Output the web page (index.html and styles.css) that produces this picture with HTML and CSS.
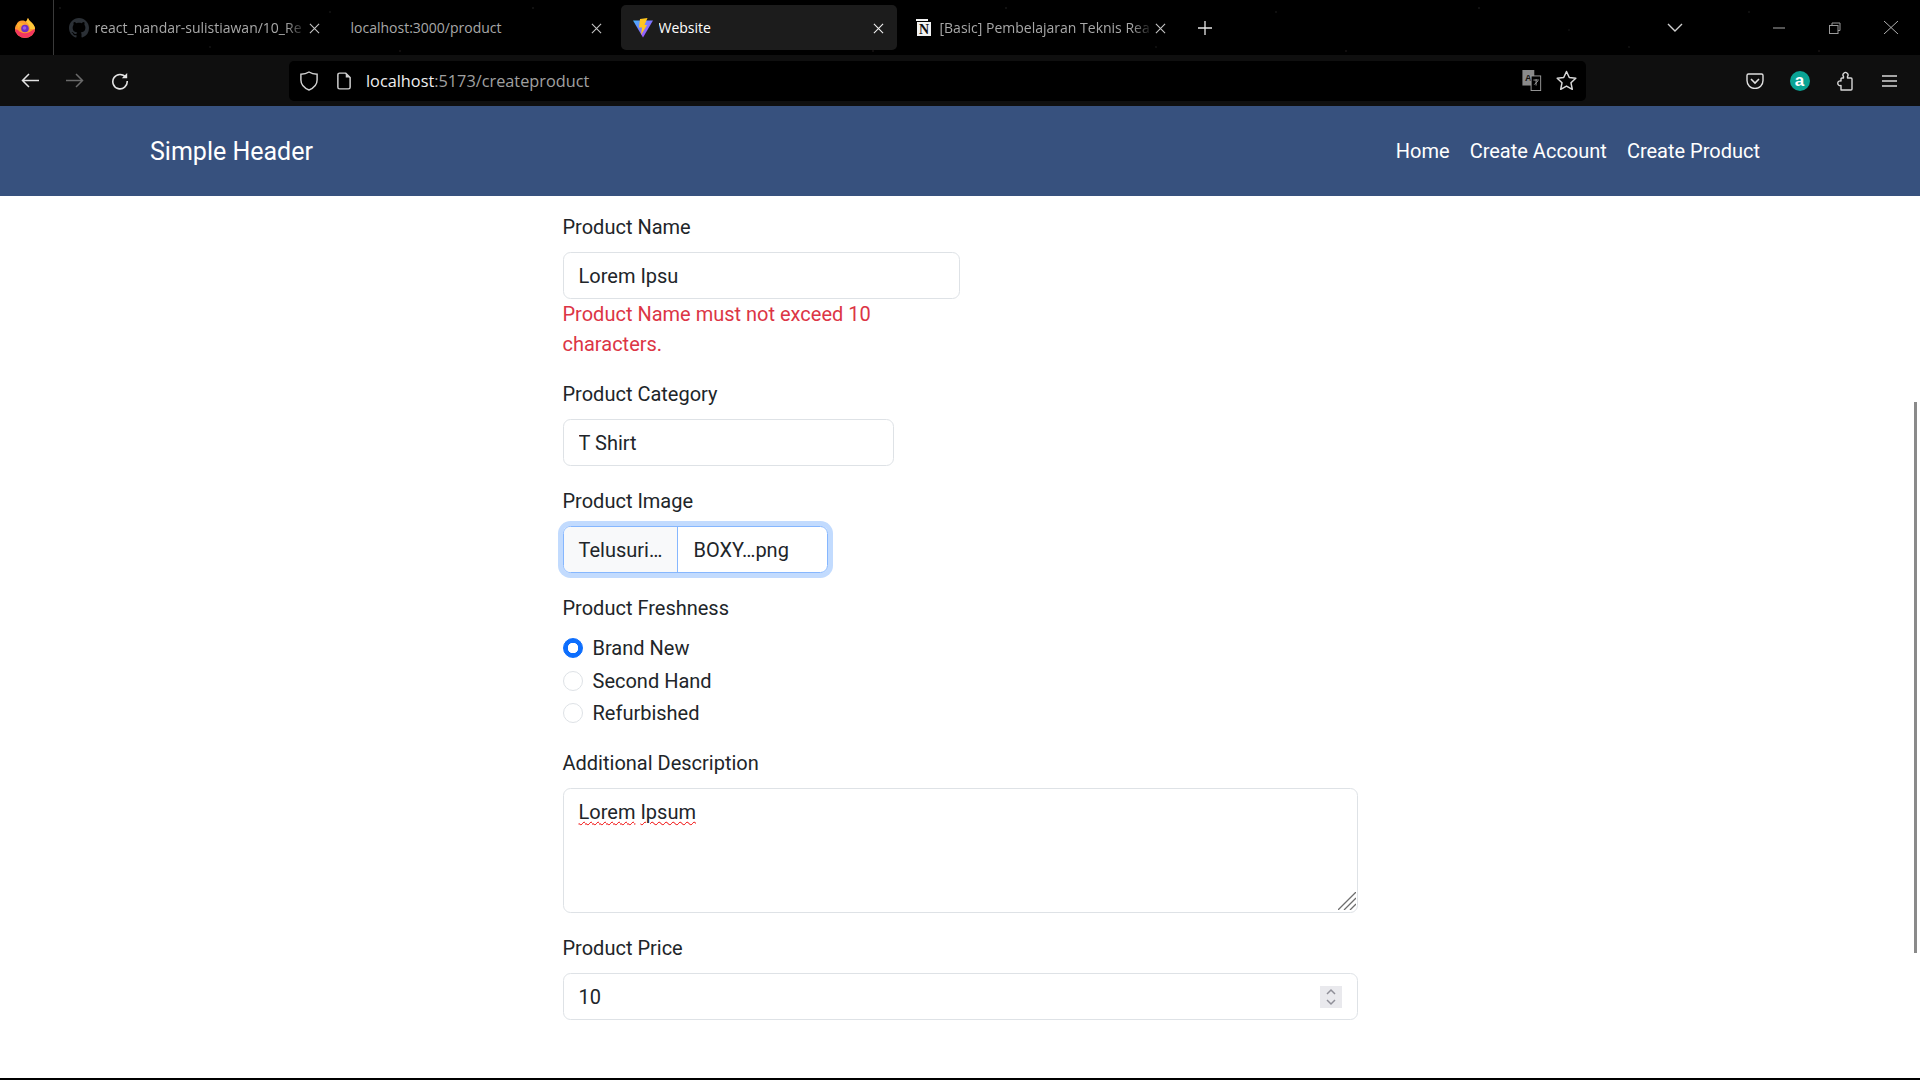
FILE: index.html
```html
<!DOCTYPE html>
<html lang="en">

<head>
    <meta charset="UTF-8">
    <meta name="viewport" content="width=device-width, initial-scale=1.0">
    <title>Website</title>
    <link rel="stylesheet" href="styles.css">
</head>

<body>
    <!-- browser tabs -->
    <div class="tabstrip">
        <div class="ff-logo">
            <svg width="20" height="20" viewBox="0 0 20 20">
                <path d="M1.500 6.500 C2.500 4 4.500 2.500 7 2.500 C9 2.500 10 3 11 3.500 C12 2.500 12.500 1 13 0 C13.500 2 15 3 16.500 4.500 C19 7 20 9 20 11 A10 9 0 0 1 0 11 C0 9 0.500 7.500 1.500 6.500 Z" fill="#ff9a2e"/>
                <path d="M13 0 C13.500 2 15 3 16.500 4.500 C19 7 20 9 20 11 L15 11 C15 8 13 6 11 3.500 C12 2.500 12.500 1 13 0 Z" fill="#ffc83a"/>
                <path d="M0 11 A10 9 0 0 0 20 11 L16 13 C13 16 6 16 3 12 Z" fill="#f3365f"/>
                <path d="M2 6 C4 4.500 7 5 9 6.500 L5 8 L3.500 10.500 Z" fill="#ffb22e"/>
                <circle cx="10" cy="10.500" r="3.800" fill="#6d2ec6"/>
                <circle cx="9.500" cy="10" r="1.800" fill="#9b5ce8"/>
            </svg>
        </div>
        <div class="tab">
            <svg class="tab-icon" width="20" height="20" viewBox="0 0 16 16"><path fill="#2b3036" d="M8 0C3.58 0 0 3.58 0 8c0 3.54 2.29 6.53 5.47 7.59.4.07.55-.17.55-.38 0-.19-.01-.82-.01-1.49-2.01.37-2.53-.49-2.69-.94-.09-.23-.48-.94-.82-1.13-.28-.15-.68-.52-.01-.53.63-.01 1.08.58 1.23.82.72 1.21 1.87.87 2.33.66.07-.52.28-.87.51-1.07-1.78-.2-3.64-.89-3.64-3.95 0-.87.31-1.59.82-2.15-.08-.2-.36-1.02.08-2.12 0 0 .67-.21 2.2.82.64-.18 1.32-.27 2-.27s1.36.09 2 .27c1.53-1.04 2.2-.82 2.2-.82.44 1.1.16 1.92.08 2.12.51.56.82 1.27.82 2.15 0 3.07-1.87 3.75-3.65 3.95.29.25.54.73.54 1.48 0 1.07-.01 1.93-.01 2.2 0 .21.15.46.55.38A8.01 8.01 0 0 0 16 8c0-4.42-3.58-8-8-8z"/></svg>
            <span class="tab-title fade">react_nandar-sulistiawan/10_Re</span>
            <svg class="tab-close" width="11" height="11" viewBox="0 0 12 12"><path d="M1 1 11 11M11 1 1 11" stroke="#c4c4c4" stroke-width="1.2"/></svg>
        </div>
        <div class="tab">
            <span class="tab-title">localhost:3000/product</span>
            <svg class="tab-close" width="11" height="11" viewBox="0 0 12 12"><path d="M1 1 11 11M11 1 1 11" stroke="#c4c4c4" stroke-width="1.2"/></svg>
        </div>
        <div class="tab tab-active">
            <svg class="tab-icon" width="20" height="20" viewBox="0 0 20 20">
                <defs>
                    <linearGradient id="viteBody" x1="0" y1="0" x2="1" y2="1">
                        <stop offset="0" stop-color="#41b6ff"/>
                        <stop offset="1" stop-color="#bd34fe"/>
                    </linearGradient>
                </defs>
                <path d="M0 2.500 L20 2.500 L10 19.500 Z" fill="url(#viteBody)"/>
                <path d="M7 1 L14.500 0 L11.500 7 L14 7 L8 17 L9 9.500 L6 9.500 Z" fill="#ffc61e"/>
            </svg>
            <span class="tab-title">Website</span>
            <svg class="tab-close" width="11" height="11" viewBox="0 0 12 12"><path d="M1 1 11 11M11 1 1 11" stroke="#f0f0f0" stroke-width="1.2"/></svg>
        </div>
        <div class="tab">
            <svg class="tab-icon notion-icon" width="16" height="18" viewBox="0 0 16 18">
                <rect x="0" y="0" width="12" height="2" fill="#f2f2f2"/>
                <rect x="1" y="3" width="14" height="14" fill="#f2f2f2"/>
                <text x="8" y="15" class="notion-n">N</text>
            </svg>
            <span class="tab-title fade">[Basic] Pembelajaran Teknis Rea</span>
            <svg class="tab-close" width="11" height="11" viewBox="0 0 12 12"><path d="M1 1 11 11M11 1 1 11" stroke="#c4c4c4" stroke-width="1.2"/></svg>
        </div>
        <svg class="new-tab" width="14" height="14" viewBox="0 0 14 14"><path d="M7 0V14M0 7H14" stroke="#e6e6e6" stroke-width="1.3"/></svg>
        <svg class="tab-list" width="16" height="9" viewBox="0 0 16 9"><path d="M1 1 8 8 15 1" fill="none" stroke="#d0d0d0" stroke-width="1.4"/></svg>
        <div class="win-btns">
            <div class="win-btn">
                <svg width="12" height="12" viewBox="0 0 12 12"><path d="M0 6H12" stroke="#9a9a9a" stroke-width="1.1"/></svg>
            </div>
            <div class="win-btn">
                <svg width="12" height="12" viewBox="0 0 12 12"><path d="M3 3V1H11V8.500H9" fill="none" stroke="#9a9a9a"/><rect x="0.500" y="3.500" width="8.500" height="8" fill="none" stroke="#9a9a9a"/></svg>
            </div>
            <div class="win-btn">
                <svg width="14" height="13" viewBox="0 0 14 13"><path d="M0 0 14 13M14 0 0 13" stroke="#b0b0b0" stroke-width="1"/></svg>
            </div>
        </div>
    </div>

    <!-- browser toolbar -->
    <div class="toolbar">
        <div class="nav-btn">
            <svg width="18" height="15" viewBox="0 0 18 15"><path d="M18 7.500H1.500M8 1 1.500 7.500 8 14" fill="none" stroke="#e4e4e4" stroke-width="1.5"/></svg>
        </div>
        <div class="nav-btn">
            <svg width="18" height="15" viewBox="0 0 18 15"><path d="M0 7.500H16.500M10 1 16.500 7.500 10 14" fill="none" stroke="#6a6a6a" stroke-width="1.5"/></svg>
        </div>
        <div class="nav-btn reload-btn">
            <svg width="18" height="18" viewBox="0 0 20 20"><path d="M16.500 6A8 8 0 1 0 18 10" fill="none" stroke="#e4e4e4" stroke-width="1.800"/><path d="M18 1V7H12Z" fill="#e4e4e4"/></svg>
        </div>
        <div class="urlbar">
            <svg class="url-shield" width="18" height="20" viewBox="0 0 20 22"><path d="M10 1 C13 3 16 3.500 19 3.500 V10 C19 15 15 19 10 21 C5 19 1 15 1 10 V3.500 C4 3.500 7 3 10 1 Z" fill="none" stroke="#d0d0d0" stroke-width="1.600"/></svg>
            <svg class="url-page" width="14" height="18" viewBox="0 0 16 20"><path d="M3 1H10L15 6V17A2 2 0 0 1 13 19H3A2 2 0 0 1 1 17V3A2 2 0 0 1 3 1Z" fill="none" stroke="#d0d0d0" stroke-width="1.700"/><path d="M10 1V6H15Z" fill="#d0d0d0"/></svg>
            <span class="url-text"><span class="url-host">localhost</span>:5173/createproduct</span>
            <svg class="url-translate" width="20" height="21" viewBox="0 0 21 23">
                <rect x="0" y="0" width="13" height="17" fill="#8a8a8a"/>
                <text x="6.500" y="12" class="translate-a">A</text>
                <rect x="9.500" y="6.500" width="10.500" height="16" fill="#000" stroke="#a0a0a0"/>
                <path d="M12 11H18M15 10V17M13 16 17 12" fill="none" stroke="#a0a0a0"/>
            </svg>
            <svg class="url-star" width="21" height="21" viewBox="0 0 21 21"><path d="M10.500 1.500 13.300 7.500 19.800 8.300 15 12.800 16.300 19.300 10.500 16.100 4.700 19.300 6 12.800 1.200 8.300 7.700 7.500Z" fill="none" stroke="#d8d8d8" stroke-width="1.500" stroke-linejoin="round"/></svg>
        </div>
        <div class="tool-icons">
            <div class="tool-btn">
                <svg width="18" height="16" viewBox="0 0 18 16"><path d="M2.500 1H15.500A1.500 1.500 0 0 1 17 2.500V7.500A7.500 7.500 0 0 1 1 7.500V2.500A1.500 1.500 0 0 1 2.500 1Z" fill="none" stroke="#e0e0e0" stroke-width="1.400"/><path d="M5 6 9 10 13 6" fill="none" stroke="#e0e0e0" stroke-width="1.600"/></svg>
            </div>
            <div class="tool-btn">
                <div class="avatar">a</div>
            </div>
            <div class="tool-btn">
                <svg width="16" height="20" viewBox="0 0 16 20"><path d="M4 19H14A1 1 0 0 0 15 18V8A1 1 0 0 0 14 7H10.500V5.500A2.500 2.500 0 1 0 6.500 5.500V7H5A1 1 0 0 0 4 8V10A2.400 2.400 0 1 0 4 14.500Z" fill="none" stroke="#d8d8d8" stroke-width="1.400" stroke-linejoin="round"/></svg>
            </div>
            <div class="tool-btn">
                <svg width="15" height="12" viewBox="0 0 15 12"><path d="M0 1H15M0 6H15M0 11H15" stroke="#d8d8d8" stroke-width="1.400"/></svg>
            </div>
        </div>
    </div>

    <!-- the page itself -->
    <header class="site-header">
        <div class="brand">Simple Header</div>
        <nav class="site-nav">
            <a href="#">Home</a>
            <a href="#">Create Account</a>
            <a href="#">Create Product</a>
        </nav>
    </header>

    <main class="page">
        <form class="product-form">
            <div class="form-group col-6">
                <label class="form-label" for="productName">Product Name</label>
                <input class="form-input" type="text" id="productName" value="Lorem Ipsu">
                <div class="form-error">Product Name must not exceed 10 characters.</div>
            </div>

            <div class="form-group col-5">
                <label class="form-label" for="productCategory">Product Category</label>
                <input class="form-input" type="text" id="productCategory" value="T Shirt">
            </div>

            <div class="form-group col-4">
                <div class="form-label">Product Image</div>
                <div class="file-input">
                    <span class="file-btn">Telusuri…</span>
                    <span class="file-name">BOXY…png</span>
                </div>
            </div>

            <div class="form-group radio-group">
                <div class="form-label">Product Freshness</div>
                <label class="radio-row"><input type="radio" name="fresh" checked>Brand New</label>
                <label class="radio-row"><input type="radio" name="fresh">Second Hand</label>
                <label class="radio-row"><input type="radio" name="fresh">Refurbished</label>
            </div>

            <div class="form-group">
                <div class="form-label">Additional Description</div>
                <div class="form-input text-area">
                    <span class="misspelt">Lorem</span> <span class="misspelt">Ipsum</span>
                    <svg class="resize-grip" width="18" height="18" viewBox="0 0 18 18"><path d="M0 18 18 0M6 18 18 6M12 18 18 12" stroke="#6e6e6e" stroke-width="1.300"/></svg>
                </div>
            </div>

            <div class="form-group">
                <label class="form-label" for="productPrice">Product Price</label>
                <div class="form-input number-input">
                    <input type="text" id="productPrice" value="10">
                    <div class="spinner">
                        <svg width="10" height="18" viewBox="0 0 10 18"><path d="M1 6 5 2 9 6M1 12 5 16 9 12" fill="none" stroke="#8f8f98" stroke-width="1.500"/></svg>
                    </div>
                </div>
            </div>
        </form>
        <div class="scroll-thumb"></div>
    </main>
    <div class="bottom-edge"></div>
</body>

</html>
```

FILE: styles.css
```css
:root {
    --col-header: #37517e;
    --col-text: #212529;
    --col-border: #dee2e6;
    --col-error: #dc3545;
    --col-focus: #86b7fe;
    --col-strip: #000000;
    --col-toolbar: #0f0f0f;
    --font-page: "Roboto", sans-serif;
    --font-chrome: "Open Sans", sans-serif;
}

* {
    box-sizing: border-box;
}

html, body {
    height: 100%;
}

body {
    margin: 0;
    display: flex;
    flex-direction: column;
    overflow: hidden;
    background: #fff;
    font-family: var(--font-page);
    font-size: 20px;
    line-height: 30px;
    color: var(--col-text);
}

/* tab strip */
.tabstrip {
    height: 55px;
    flex: none;
    display: flex;
    align-items: flex-start;
    background-color: var(--col-strip);
    background-image:
        radial-gradient(1px 1px at 60px 8px, #3a3a3a, transparent),
        radial-gradient(1px 1px at 210px 47px, #2e2e2e, transparent),
        radial-gradient(1px 1px at 330px 12px, #333, transparent),
        radial-gradient(1px 1px at 150px 30px, #262626, transparent),
        radial-gradient(1px 1px at 400px 51px, #3a3030, transparent);
    background-size: 473px 55px;
}

.ff-logo {
    width: 54px;
    height: 55px;
    margin-right: 3px;
    flex: none;
    display: flex;
    align-items: center;
    padding-left: 15px;
    border-right: 1px solid #3a3a3a;
}

.tab {
    width: 276px;
    height: 45px;
    margin: 5px 6px 0 0;
    padding: 1px 13.500px 0 11.500px;
    flex: none;
    display: flex;
    align-items: center;
    border-radius: 5px;
    font-family: var(--font-chrome);
    font-size: 14px;
    color: #a8a8a8;
}

.tab-active {
    background: #1c1c1c;
    color: #fff;
}

.tab-icon {
    flex: none;
    margin-right: 6px;
}

.notion-icon {
    margin: 0 8px 0 1px;
}

.tab-title {
    flex: 1;
    min-width: 0;
    white-space: nowrap;
    overflow: hidden;
}

.fade {
    -webkit-mask-image: linear-gradient(to right, #000 90%, transparent 100%);
    mask-image: linear-gradient(to right, #000 90%, transparent 100%);
}

.tab-close {
    flex: none;
    margin-left: 2px;
}

.notion-n {
    font-family: "Liberation Serif", serif;
    font-weight: bold;
    font-size: 14px;
    text-anchor: middle;
    fill: #111;
}

.new-tab {
    flex: none;
    margin: 21px 0 0 13px;
}

.tab-list {
    flex: none;
    margin: 23px 0 0 455px;
}

.win-btns {
    margin-left: 68px;
    flex: none;
    display: flex;
}

.win-btn {
    width: 56px;
    height: 55px;
    display: flex;
    align-items: center;
    justify-content: center;
}

/* toolbar */
.toolbar {
    height: 51px;
    flex: none;
    display: flex;
    align-items: center;
    padding: 0 8px 0 7px;
    background: var(--col-toolbar);
}

.nav-btn {
    width: 45.500px;
    height: 45px;
    flex: none;
    display: flex;
    align-items: center;
    justify-content: center;
}

.reload-btn {
    padding-right: 2px;
}

.urlbar {
    width: 1297px;
    height: 40px;
    margin-left: 145.500px;
    flex: none;
    display: flex;
    align-items: center;
    padding: 0 9px 0 11px;
    background: #000;
    border-radius: 5px;
}

.url-page {
    margin-left: 19px;
}

.url-text {
    margin-left: 15px;
    padding-top: 1px;
    flex: 1;
    font-family: var(--font-chrome);
    font-size: 16.300px;
    color: #a0a0a0;
}

.url-host {
    color: #efefef;
}

.url-translate {
    margin-right: 14px;
}

.translate-a {
    font-family: "Liberation Sans", sans-serif;
    font-weight: bold;
    font-size: 10px;
    text-anchor: middle;
    fill: #111;
}

.tool-icons {
    margin-left: auto;
    display: flex;
}

.tool-btn {
    width: 45px;
    height: 45px;
    display: flex;
    align-items: center;
    justify-content: center;
}

.avatar {
    width: 20px;
    height: 20px;
    border-radius: 50%;
    background: #0aa394;
    color: #fff;
    font-family: "Liberation Sans", sans-serif;
    font-weight: bold;
    font-size: 17px;
    line-height: 19px;
    text-align: center;
}

/* site header */
.site-header {
    height: 90px;
    flex: none;
    display: flex;
    align-items: center;
    justify-content: space-between;
    padding: 0 150px;
    background: var(--col-header);
    color: #fff;
}

.brand {
    margin-top: 2px;
    font-size: 25px;
}

.site-nav {
    display: flex;
}

.site-nav a {
    padding: 0 10px;
    color: #fff;
    text-decoration: none;
}

/* form */
.page {
    flex: 1;
    position: relative;
    padding: 16px 0 0 562.500px;
}

.product-form {
    width: 795.500px;
}

.form-group {
    margin-bottom: 20px;
}

.col-6 {
    width: 397px;
}

.col-5 {
    width: 331px;
}

.col-4 {
    width: 265.500px;
}

.form-label {
    display: block;
    margin-bottom: 10px;
}

.form-input {
    display: block;
    width: 100%;
    height: 47px;
    padding: 7.500px 15px;
    border: 1px solid var(--col-border);
    border-radius: 7.500px;
    background: #fff;
    font: inherit;
    color: var(--col-text);
}

.form-error {
    color: var(--col-error);
}

.file-input {
    display: flex;
    height: 47px;
    border: 1px solid var(--col-focus);
    border-radius: 7.500px;
    box-shadow: 0 0 0 5px rgba(13, 110, 253, 0.25);
    overflow: hidden;
}

.file-btn {
    width: 114px;
    flex: none;
    padding: 7.500px 0 0 15px;
    background: #f8f9fa;
    border-right: 1px solid var(--col-focus);
}

.file-name {
    padding: 7.500px 0 0 16px;
}

.radio-row {
    display: flex;
    align-items: center;
    height: 30px;
    margin-bottom: 2.500px;
}

.radio-row input {
    appearance: none;
    width: 20px;
    height: 20px;
    margin: 0 10px 0 0;
    border: 1px solid var(--col-border);
    border-radius: 50%;
    background: #fff;
}

.radio-row input:checked {
    border-color: #0d6efd;
    background: radial-gradient(circle, #fff 0 5px, #0d6efd 5.500px);
}

.text-area {
    position: relative;
    height: 125px;
}

.misspelt {
    text-decoration: underline wavy #f00000 1px;
    text-underline-offset: 2px;
}

.resize-grip {
    position: absolute;
    right: 1px;
    bottom: 2px;
}

.number-input {
    display: flex;
    align-items: center;
    padding-right: 15px;
}

.number-input input {
    flex: 1;
    min-width: 0;
    padding: 0;
    border: 0;
    outline: 0;
    background: none;
    font: inherit;
    color: var(--col-text);
}

.spinner {
    width: 22px;
    height: 22px;
    flex: none;
    display: flex;
    align-items: center;
    justify-content: center;
    background: #e9e9ed;
}

.scroll-thumb {
    position: absolute;
    top: 206px;
    right: 3px;
    width: 3px;
    height: 551px;
    background: #8a8a8a;
}

.bottom-edge {
    height: 2px;
    flex: none;
    background: #000;
}
```
